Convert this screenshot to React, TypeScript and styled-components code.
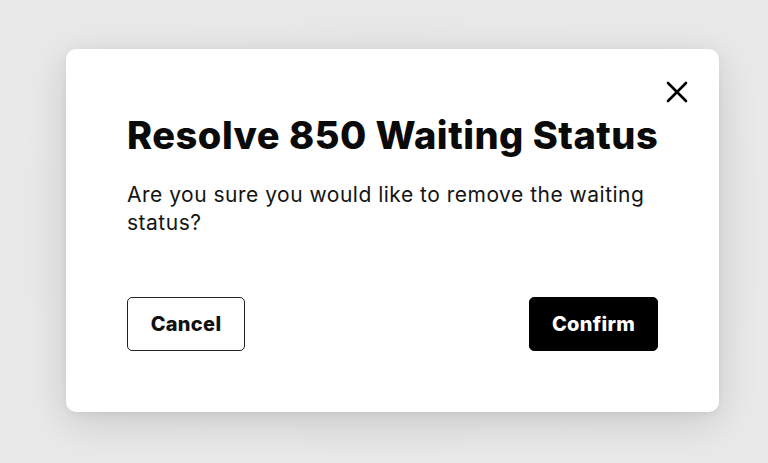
import React from "react";
import styled, { createGlobalStyle } from "styled-components";

const Global = createGlobalStyle`
  html, body { margin: 0; padding: 0; }
  body {
    width: 768px;
    height: 463px;
    background: #e8e8e8;
    font-family: "Inter", "Noto Sans", sans-serif;
    overflow: hidden;
  }
`;

const Backdrop = styled.div`
  width: 768px;
  height: 463px;
  box-sizing: border-box;
  padding: 49px 49px 0 66px;
  background: radial-gradient(ellipse at center, #e4e4e4 0%, #e9e9e9 80%);
`;

const Modal = styled.div`
  position: relative;
  width: 653px;
  height: 363px;
  box-sizing: border-box;
  background: #ffffff;
  border-radius: 10px;
  box-shadow: 0 10px 40px rgba(0, 0, 0, 0.14), 0 2px 8px rgba(0, 0, 0, 0.05);
  padding: 64px 61px 0 61px;
  display: flex;
  flex-direction: column;
`;

const CloseButton = styled.button`
  position: absolute;
  top: 31px;
  right: 30px;
  width: 24px;
  height: 24px;
  padding: 0;
  border: none;
  background: transparent;
  display: flex;
  align-items: center;
  justify-content: center;
  cursor: pointer;
`;

const Title = styled.h1`
  margin: 0;
  font-size: 38px;
  font-weight: 800;
  line-height: 44px;
  color: #0a0a0a;
  letter-spacing: 0.5px;
  white-space: nowrap;
`;

const Message = styled.p`
  margin: 24px 0 0 0;
  font-size: 21px;
  font-weight: 400;
  line-height: 28px;
  color: #141414;
  letter-spacing: 0.5px;
`;

const Actions = styled.div`
  margin-top: 60px;
  display: flex;
  justify-content: space-between;
  align-items: center;
`;

const Button = styled.button<{ $primary?: boolean }>`
  box-sizing: border-box;
  height: 54px;
  padding: 0;
  width: ${(p) => (p.$primary ? "129px" : "118px")};
  border-radius: 5px;
  font-family: "Inter", "Noto Sans", sans-serif;
  font-size: 20px;
  font-weight: 800;
  letter-spacing: 0.3px;
  cursor: pointer;
  border: 1.5px solid ${(p) => (p.$primary ? "#000" : "#222")};
  background: ${(p) => (p.$primary ? "#000" : "#fff")};
  color: ${(p) => (p.$primary ? "#fff" : "#111")};
`;

export default function App() {
  return (
    <>
      <Global />
      <Backdrop>
        <Modal>
          <CloseButton aria-label="Close">
            <svg width="22" height="22" viewBox="0 0 22 22">
              <path d="M2 2 L20 20 M20 2 L2 20" stroke="#000" strokeWidth="2.6" strokeLinecap="round" />
            </svg>
          </CloseButton>
          <Title>Resolve 850 Waiting Status</Title>
          <Message>Are you sure you would like to remove the waiting status?</Message>
          <Actions>
            <Button>Cancel</Button>
            <Button $primary>Confirm</Button>
          </Actions>
        </Modal>
      </Backdrop>
    </>
  );
}
